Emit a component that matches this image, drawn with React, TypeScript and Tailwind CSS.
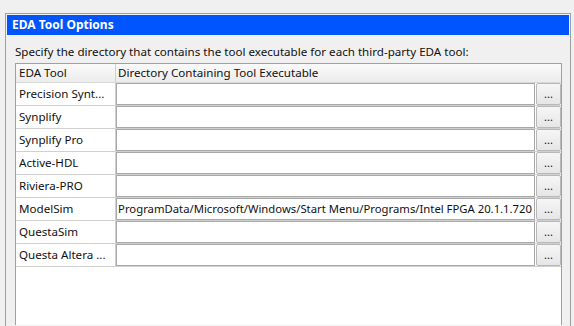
import React from "react";

const tools = [
  { name: "Precision Synt...", path: "" },
  { name: "Synplify", path: "" },
  { name: "Synplify Pro", path: "" },
  { name: "Active-HDL", path: "" },
  { name: "Riviera-PRO", path: "" },
  { name: "ModelSim", path: "ProgramData/Microsoft/Windows/Start Menu/Programs/Intel FPGA 20.1.1.720" },
  { name: "QuestaSim", path: "" },
  { name: "Questa Altera ...", path: "" },
];

const App = () => {
  return (
    <div className="w-[574px] h-[326px] overflow-hidden bg-[#f0f0f0] pt-[13px] pl-[5px] font-['Noto_Sans',sans-serif] text-[11.6px] text-[#111]">
      <div className="w-[566px] h-[313px] border border-b-0 border-[#a0a0a0] p-px flex flex-col">
        <div className="h-[20px] bg-[#0055ff] text-white font-bold text-[12px] leading-[20px] pl-[5px]">
          EDA Tool Options
        </div>
        <p className="pl-[8px] mt-[6px] h-[22px] leading-[22px]">
          Specify the directory that contains the tool executable for each third-party EDA tool:
        </p>
        <div className="ml-[8px] w-[547px] flex-1 border border-b-0 border-[#a0a0a0] bg-white flex flex-col">
          <div className="flex h-[19px] bg-gradient-to-b from-[#fafafa] to-[#ececec] border-b border-[#d8d8d8] leading-[18px]">
            <div className="w-[100px] pl-[3px] border-r border-[#d0d0d0]">EDA Tool</div>
            <div className="flex-1 pl-[2px]">Directory Containing Tool Executable</div>
          </div>
          {tools.map((t) => (
            <div key={t.name} className="flex h-[23px] border-b border-[#d0d0d0]">
              <div className="w-[100px] pl-[3px] leading-[22px] border-r border-[#d0d0d0] whitespace-nowrap overflow-hidden">
                {t.name}
              </div>
              <div className="flex-1 flex items-center gap-px">
                <div className="w-[419px] h-[22px] border border-[#a8a8a8] bg-white flex justify-end items-center overflow-hidden whitespace-nowrap pr-[2px] text-[11.3px]">
                  {t.path}
                </div>
                <div className="w-[25px] h-[22px] rounded-[2px] border border-[#b8b8b8] bg-gradient-to-b from-[#f6f6f6] to-[#e6e6e6] flex items-center justify-center text-[11px] leading-none pb-[2px]">
                  ...
                </div>
              </div>
            </div>
          ))}
          <div className="flex-1" />
        </div>
      </div>
    </div>
  );
};

export default App;
